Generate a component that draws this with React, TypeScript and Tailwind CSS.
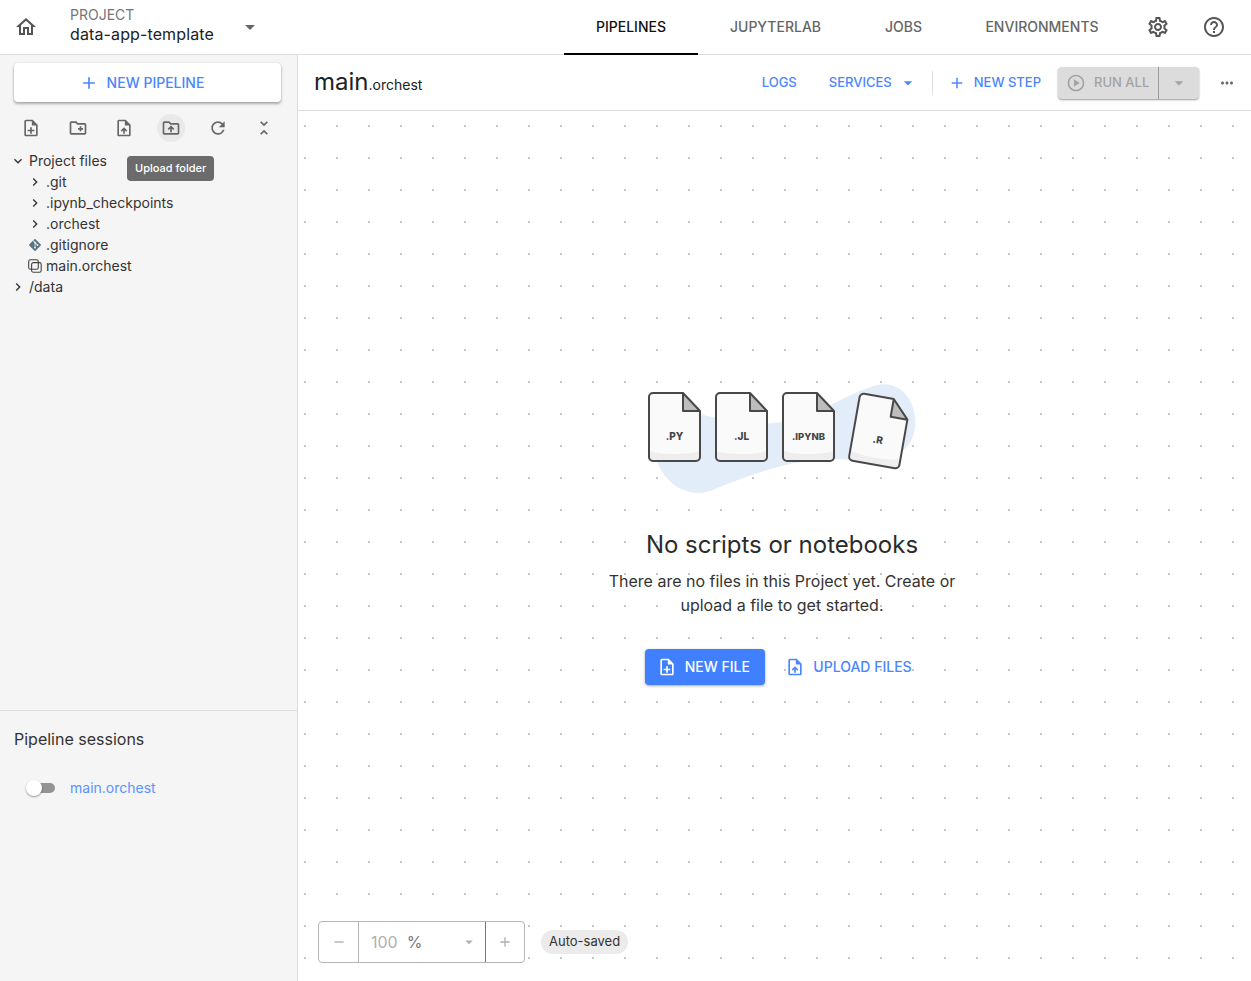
import React from "react";
import {
  MdOutlineHome, MdArrowDropDown, MdAdd, MdOutlineNoteAdd, MdOutlineCreateNewFolder, MdOutlineUploadFile,
  MdOutlineDriveFolderUpload, MdRefresh, MdUnfoldLess, MdOutlineSettings, MdHelpOutline, MdExpandMore,
  MdChevronRight, MdMoreHoriz, MdOutlinePlayCircle, MdRemove,
} from "react-icons/md";
import { SiGit } from "react-icons/si";

function Doc({ x, y = 13, label, rotate, size = 10 }: { x: number; y?: number; label: string; rotate?: number; size?: number }) {
  const outline = `M${x + 4} ${y}H${x + 34}L${x + 51} ${y + 18}V${y + 64}a4 4 0 0 1-4 4H${x + 4}a4 4 0 0 1-4-4V${y + 4}a4 4 0 0 1 4-4z`;
  return (
    <g transform={rotate ? `rotate(${rotate} ${x + 25.5} ${y + 34})` : undefined}>
      <path d={outline} fill="#fafafa" />
      <path d={`M${x + 1} ${y + 58}c8 4 40 4 49 0v7a3 3 0 0 1-3 3H${x + 4}a3 3 0 0 1-3-3z`} fill="#eeeeee" />
      <path d={`M${x + 34} ${y}L${x + 51} ${y + 18}H${x + 34}z`} fill="#bdbdbd" />
      <path d={`${outline}M${x + 34} ${y}V${y + 18}H${x + 51}`} fill="none" stroke="#484848" strokeWidth="2" strokeLinejoin="round" />
      <text x={x + 25.5} y={y + 46.5} textAnchor="middle" fontSize={size} fontWeight="800" fill="#444" fontFamily="Inter, sans-serif">{label}</text>
    </g>
  );
}

function Illustration() {
  return (
    <svg width="290" height="120" viewBox="0 0 290 120" className="ml-[6px]">
      <path d="M20 30C60 30 95 48 145 42C175 37 200 17 233 6C262 -3 278 25 275 47C272 75 245 85 210 80C170 75 125 88 70 111C45 119 22 100 17 80C13 60 14 40 20 30Z" fill="#e3edf9" />
      <Doc x={9} label=".PY" />
      <Doc x={76} label=".JL" />
      <Doc x={143} label=".IPYNB" size={9.5} />
      <Doc x={214} y={17} label=".R" rotate={10} size={10} />
    </svg>
  );
}

function OrchestFile() {
  return (
    <svg width="14" height="14" viewBox="0 0 14 14" fill="none" stroke="#444" strokeWidth="1.1">
      <rect x="0.7" y="0.7" width="9.6" height="9.6" rx="1.8" />
      <rect x="3.6" y="3.6" width="9.6" height="9.6" rx="1.8" />
    </svg>
  );
}

const Row = ({ indent, icon, label }: { indent?: boolean; icon: React.ReactNode; label: string }) => (
  <div className={indent ? "ml-[12px] flex h-[21px] items-center gap-[3px]" : "ml-[-5px] flex h-[21px] items-center gap-[3px]"}>
    <span className="flex w-[17px] shrink-0 items-center justify-center">{icon}</span>
    <span>{label}</span>
  </div>
);

export default function App() {
  return (
    <div className="flex h-[981px] w-[1251px] flex-col overflow-hidden bg-white text-[14px] text-[#212121] font-['Inter','Liberation_Sans',sans-serif]">
      <header className="flex h-[55px] shrink-0 items-center border-b border-[#dedede] bg-white">
        <div className="flex w-[70px] justify-center pr-[18px]">
          <MdOutlineHome size={24} className="text-[#555]" />
        </div>
        <div className="flex w-[166px] flex-col pb-[4px] leading-[18px]">
          <span className="text-[14px] leading-[18px] text-[#757575]">PROJECT</span>
          <span className="mt-[1px] text-[16px] leading-[19px] tracking-[0.12px] text-[#212121]">data-app-template</span>
        </div>
        <MdArrowDropDown size={24} className="ml-[2px] text-[#666]" />
        <nav className="ml-[302px] flex h-[55px] items-stretch text-[14px] font-medium text-[#666]">
          <span className="flex w-[134px] items-center justify-center border-b-2 border-black text-[#111]">PIPELINES</span>
          <span className="flex w-[155px] items-center justify-center pb-[1px]">JUPYTERLAB</span>
          <span className="flex w-[101px] items-center justify-center pb-[1px]">JOBS</span>
          <span className="flex w-[176px] items-center justify-center pb-[1px]">ENVIRONMENTS</span>
        </nav>
        <MdOutlineSettings size={24} className="ml-[16px] text-[#555]" />
        <MdHelpOutline size={24} className="ml-[32px] text-[#555]" />
      </header>

      <div className="flex min-h-0 flex-1">
        <aside className="flex w-[298px] shrink-0 flex-col border-r border-[#dedede] bg-[#f5f5f5]">
          <div className="relative flex-1 px-[14px] pt-[8px]">
            <button className="flex h-[39px] w-[267px] items-center justify-center gap-[8px] rounded-[4px] bg-white pr-[12px] text-[14px] font-medium text-[#4a86ff] shadow-[0_2px_3px_rgba(0,0,0,0.3),0_0_2px_rgba(0,0,0,0.12)]">
              <MdAdd size={20} />
              NEW PIPELINE
            </button>
            <div className="ml-[-6.5px] mt-[12px] flex h-[28px] w-[280px] items-center text-[#666]">
              <span className="flex flex-1 justify-center"><MdOutlineNoteAdd size={20} /></span>
              <span className="flex flex-1 justify-center"><MdOutlineCreateNewFolder size={20} /></span>
              <span className="flex flex-1 justify-center"><MdOutlineUploadFile size={20} /></span>
              <span className="flex flex-1 justify-center">
                <span className="flex h-[28px] w-[28px] items-center justify-center rounded-full bg-[#e9e9e9]"><MdOutlineDriveFolderUpload size={20} /></span>
              </span>
              <span className="flex flex-1 justify-center"><MdRefresh size={20} /></span>
              <span className="flex flex-1 justify-center"><MdUnfoldLess size={20} /></span>
            </div>
            <div className="mt-[8px] text-[14px] leading-[21px] text-[#333]">
              <Row icon={<MdExpandMore size={16} />} label="Project files" />
              <Row indent icon={<MdChevronRight size={16} />} label=".git" />
              <Row indent icon={<MdChevronRight size={16} />} label=".ipynb_checkpoints" />
              <Row indent icon={<MdChevronRight size={16} />} label=".orchest" />
              <Row indent icon={<SiGit size={12} className="text-[#5a7684]" />} label=".gitignore" />
              <Row indent icon={<OrchestFile />} label="main.orchest" />
              <Row icon={<MdChevronRight size={16} />} label="/data" />
            </div>
            <div className="absolute left-[127px] top-[101px] rounded-[4px] bg-[#6b6b6b] px-[8px] py-[4px] text-[11px] font-medium leading-[17px] text-white">
              Upload folder
            </div>
          </div>
          <div className="h-[271px] shrink-0 border-t border-[#dedede] px-[14px] pt-[18px]">
            <div className="text-[16px] leading-[21px] text-[#333]">Pipeline sessions</div>
            <div className="mt-[25px] flex h-[24px] items-center pl-[12px]">
              <span className="relative mt-[2px] block h-[10px] w-[29px]">
                <span className="absolute inset-y-0 left-[2px] right-0 rounded-full bg-[#949494]" />
                <span className="absolute left-0 top-[-3px] h-[16px] w-[16px] rounded-full bg-white shadow-[0_1px_2px_rgba(0,0,0,0.4)]" />
              </span>
              <span className="ml-[15px] text-[14px] text-[#5b92ff]">main.orchest</span>
            </div>
          </div>
        </aside>

        <main className="flex min-w-0 flex-1 flex-col">
          <div className="flex h-[56px] shrink-0 items-center border-b border-[#dedede] bg-white pl-[16px]">
            <div className="flex items-baseline pb-[2px] text-[#212121]">
              <span className="text-[24px] leading-[28px]">main</span>
              <span className="text-[14px]">.orchest</span>
            </div>
            <div className="ml-auto flex items-center pr-[15px] text-[13px] font-medium text-[#4a86ff]">
              <span>LOGS</span>
              <span className="ml-[32px]">SERVICES</span>
              <MdArrowDropDown size={20} className="ml-[6px]" />
              <span className="ml-[14px] h-[24px] w-px bg-[#dedede]" />
              <MdAdd size={18} className="ml-[15px]" />
              <span className="ml-[8px]">NEW STEP</span>
              <div className="ml-[17px] flex h-[32px] items-stretch rounded-[4px] bg-[#dcdcdc] text-[#a3a3a3] shadow-[0_1px_2px_rgba(0,0,0,0.4)]">
                <span className="flex w-[101px] items-center border-r border-[#9a9a9a] pl-[8px]">
                  <MdOutlinePlayCircle size={20} />
                  <span className="ml-[8px]">RUN ALL</span>
                </span>
                <span className="flex w-[40px] items-center justify-center"><MdArrowDropDown size={20} /></span>
              </div>
              <MdMoreHoriz size={18} className="ml-[19px] text-[#666]" />
            </div>
          </div>

          <div className="relative flex flex-1 flex-col items-center justify-center bg-white bg-[radial-gradient(circle,#c4c4c4_1px,transparent_1.2px)] bg-[length:32px_32px] bg-[position:-9px_-1px] pb-[28px] pl-[15px]">
            <Illustration />
            <h2 className="mt-[29px] text-[24px] leading-[32px] text-[#2b2b2b]">No scripts or notebooks</h2>
            <p className="mt-[8px] w-[360px] text-center text-[16px] leading-[24px] text-[#333]">
              There are no files in this Project yet. Create or upload a file to get started.
            </p>
            <div className="mr-[7px] mt-[32px] flex h-[36px] items-center">
              <button className="flex h-[36px] w-[120px] items-center justify-center gap-[8px] rounded-[4px] bg-[#4080ff] pr-[4px] text-[14px] font-medium text-white shadow-[0_1px_3px_rgba(0,0,0,0.35)]">
                <MdOutlineNoteAdd size={20} />
                NEW FILE
              </button>
              <button className="ml-[20px] flex h-[36px] items-center gap-[8px] text-[14px] font-medium text-[#4a86ff]">
                <MdOutlineUploadFile size={20} />
                UPLOAD FILES
              </button>
            </div>

            <div className="absolute bottom-[18px] left-[20px] flex items-center">
              <div className="flex h-[42px] w-[207px] items-stretch rounded-[4px] border border-[#b5b5b5] bg-white text-[#b0b0b0]">
                <span className="flex w-[40px] items-center justify-center border-r border-[#b5b5b5]"><MdRemove size={16} /></span>
                <span className="flex w-[127px] items-center border-r border-[#777] pl-[12px] text-[16px]">
                  100<span className="ml-[9px] text-[#777]">%</span>
                  <MdArrowDropDown size={18} className="ml-auto mr-[7px]" />
                </span>
                <span className="flex flex-1 items-center justify-center"><MdAdd size={16} /></span>
              </div>
              <span className="ml-[16px] flex h-[24px] items-center rounded-full bg-[#ebebeb] px-[8px] text-[13px] text-[#333]">Auto-saved</span>
            </div>
          </div>
        </main>
      </div>
    </div>
  );
}
